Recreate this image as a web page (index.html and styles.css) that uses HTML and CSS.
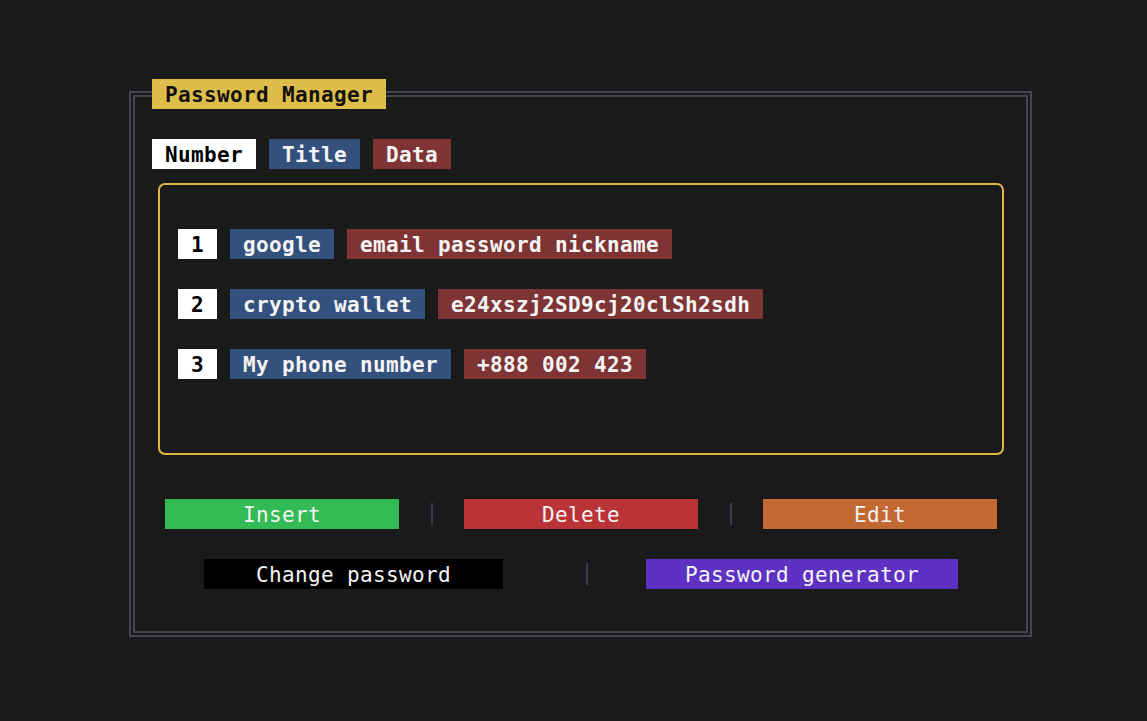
FILE: index.html
```html
<!DOCTYPE html>
<html>
<head>
<meta charset="utf-8">
<link rel="stylesheet" href="styles.css">
</head>
<body>
<div class="panel">
  <div class="title">Password Manager</div>
  <div class="tabs">
    <span class="chip white">Number</span>
    <span class="chip blue">Title</span>
    <span class="chip red">Data</span>
  </div>
  <div class="list">
    <div class="row">
      <span class="chip white">1</span>
      <span class="chip blue">google</span>
      <span class="chip red">email password nickname</span>
    </div>
    <div class="row">
      <span class="chip white">2</span>
      <span class="chip blue">crypto wallet</span>
      <span class="chip red">e24xszj2SD9cj20clSh2sdh</span>
    </div>
    <div class="row">
      <span class="chip white">3</span>
      <span class="chip blue">My phone number</span>
      <span class="chip red">+888 002 423</span>
    </div>
  </div>
  <div class="btnrow first">
    <span class="btn green w18">Insert</span>
    <span class="sepcell w5"><i class="sep"></i></span>
    <span class="btn crimson w18">Delete</span>
    <span class="sepcell w5"><i class="sep"></i></span>
    <span class="btn orange w18">Edit</span>
  </div>
  <div class="btnrow second">
    <span class="btn black w23">Change password</span>
    <span class="sepcell w11 off"><i class="sep"></i></span>
    <span class="btn purple w24">Password generator</span>
  </div>
</div>
</body>
</html>
```

FILE: styles.css
```css
html, body {
  margin: 0;
  padding: 0;
  background: #1a1a1a;
}
body {
  width: 1147px;
  height: 721px;
  overflow: hidden;
  font-family: "DejaVu Sans Mono", "Liberation Mono", monospace;
  font-size: 21px;
  letter-spacing: 0.36px;
  color: #f4f4f4;
}
.panel {
  position: relative;
  box-sizing: border-box;
  margin: 91px 0 0 129px;
  width: 903px;
  height: 546px;
  border: 6px double #45464f;
  padding: 42px 0 0 17px;
}
.title {
  position: absolute;
  top: -18px;
  left: 17px;
  height: 30px;
  line-height: 32px;
  padding: 0 13px;
  background: #dfbd4b;
  color: #111;
  font-weight: bold;
  overflow: hidden;
}
.tabs {
  display: flex;
  gap: 13px;
  height: 30px;
}
.chip {
  display: inline-block;
  height: 30px;
  line-height: 32px;
  overflow: hidden;
  padding: 0 13px;
  font-weight: bold;
  white-space: pre;
}
.white { background: #ffffff; color: #000; }
.blue { background: #34507c; color: #f4f4f4; }
.red { background: #7e3435; color: #f4f4f4; }
.list {
  box-sizing: border-box;
  margin: 14px 0 0 6px;
  width: 846px;
  height: 272px;
  border: 2px solid #dbb943;
  border-radius: 7px;
  padding: 44px 0 0 18px;
  display: flex;
  flex-direction: column;
  gap: 30px;
}
.row {
  display: flex;
  gap: 13px;
  height: 30px;
}
.btnrow {
  display: flex;
  height: 30px;
}
.btnrow.first {
  margin: 44px 0 0 13px;
}
.btnrow.second {
  margin: 30px 0 0 52px;
}
.btn {
  display: block;
  height: 30px;
  line-height: 32px;
  overflow: hidden;
  text-align: center;
  white-space: pre;
  color: #f4f4f4;
}
.w18 { width: 234px; }
.w23 { width: 299px; }
.w24 { width: 312px; }
.w5 { width: 65px; }
.w11 { width: 143px; }
.green { background: #32bb54; }
.crimson { background: #b93337; }
.orange { background: #c26831; }
.black { background: #000000; }
.purple { background: #5d32c3; }
.sepcell {
  display: flex;
  justify-content: center;
  align-items: center;
  height: 30px;
}
.sepcell.off {
  justify-content: flex-start;
  padding-left: 83px;
  box-sizing: border-box;
}
.sep {
  display: block;
  width: 2px;
  height: 22px;
  background: #353c50;
}
```
